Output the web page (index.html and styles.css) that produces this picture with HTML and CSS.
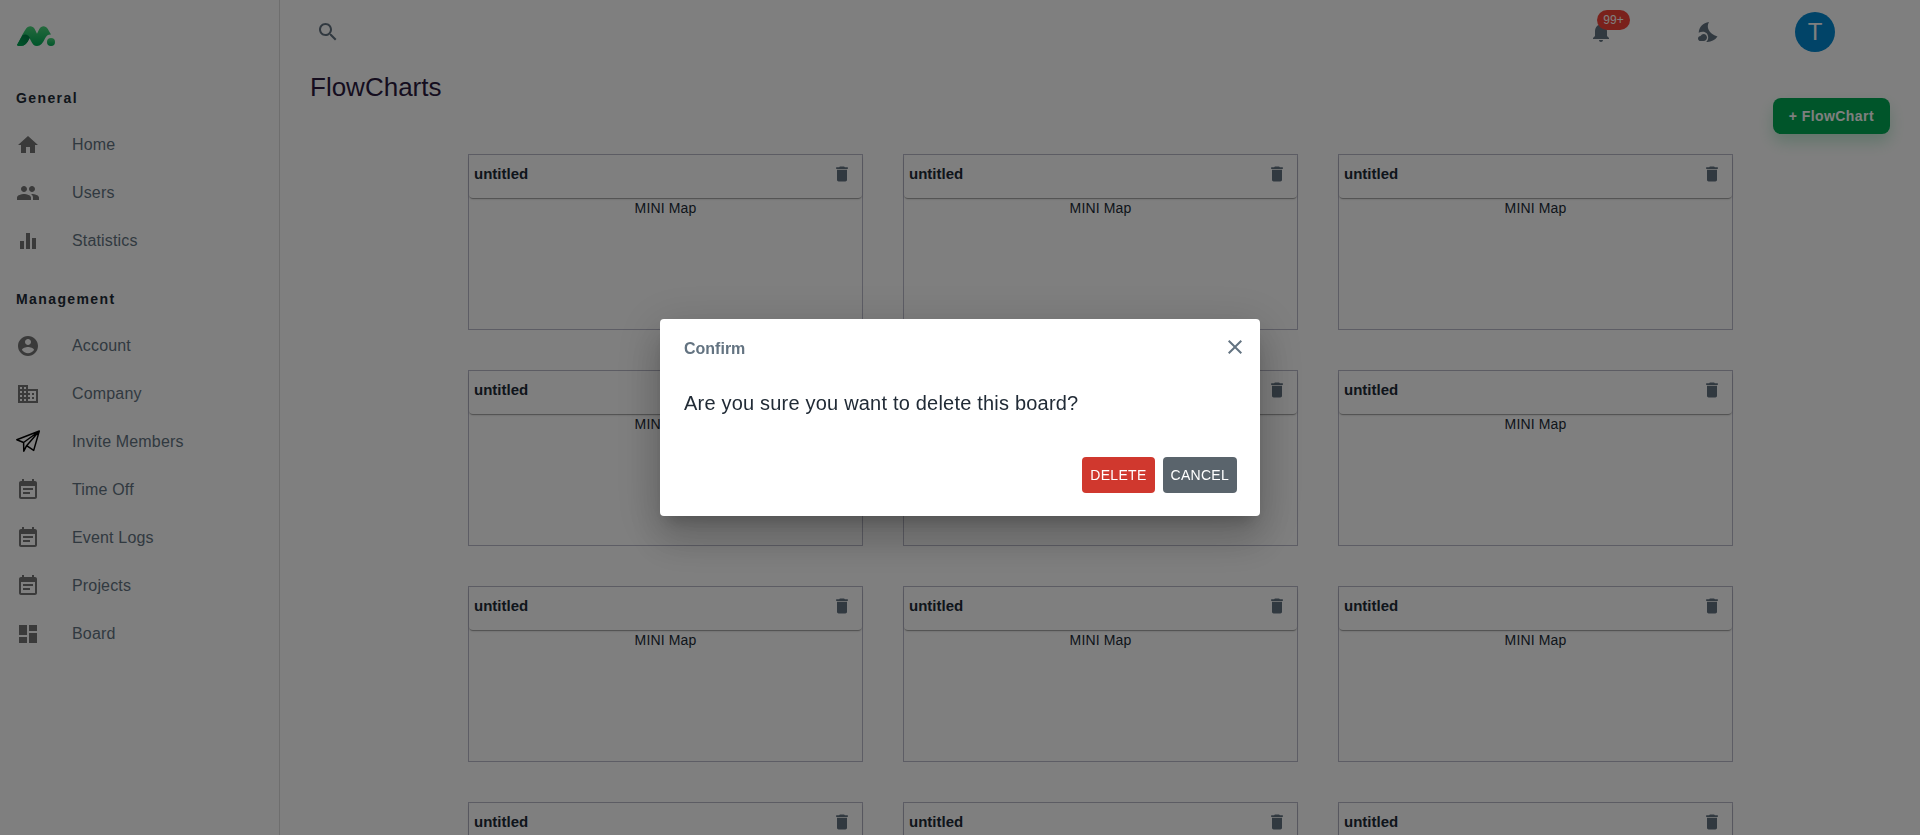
FILE: index.html
```html
<!DOCTYPE html>
<html lang="en">
<head>
<meta charset="utf-8">
<title>FlowCharts</title>
<link rel="stylesheet" href="styles.css">
</head>
<body>
<svg class="sprite" aria-hidden="true">
  <symbol id="i-home" viewBox="0 0 24 24"><path d="M10 20v-6h4v6h5v-8h3L12 3 2 12h3v8z"/></symbol>
  <symbol id="i-users" viewBox="0 0 24 24"><path d="M16 11c1.660 0 2.990-1.340 2.990-3S17.660 5 16 5s-3 1.340-3 3 1.340 3 3 3zm-8 0c1.660 0 2.990-1.340 2.990-3S9.660 5 8 5 5 6.340 5 8s1.340 3 3 3zm0 2c-2.330 0-7 1.170-7 3.500V19h14v-2.500c0-2.330-4.670-3.500-7-3.500zm8 0c-.290 0-.620.020-.970.050 1.160.840 1.970 1.970 1.970 3.450V19h6v-2.500c0-2.330-4.670-3.500-7-3.500z"/></symbol>
  <symbol id="i-stats" viewBox="0 0 24 24"><path d="M4 12h4v8H4zM10 4h4v16h-4zM16 9h4v11h-4z"/></symbol>
  <symbol id="i-account" viewBox="0 0 24 24"><path d="M12 2C6.480 2 2 6.480 2 12s4.480 10 10 10 10-4.480 10-10S17.520 2 12 2zm0 3c1.660 0 3 1.340 3 3s-1.340 3-3 3-3-1.340-3-3 1.340-3 3-3zm0 14.200c-2.500 0-4.710-1.280-6-3.220.030-1.990 4-3.080 6-3.080 1.990 0 5.970 1.090 6 3.080-1.290 1.940-3.500 3.220-6 3.220z"/></symbol>
  <symbol id="i-company" viewBox="0 0 24 24"><path d="M12 7V3H2v18h20V7H12zM6 19H4v-2h2v2zm0-4H4v-2h2v2zm0-4H4V9h2v2zm0-4H4V5h2v2zm4 12H8v-2h2v2zm0-4H8v-2h2v2zm0-4H8V9h2v2zm0-4H8V5h2v2zm10 12h-8v-2h2v-2h-2v-2h2v-2h-2V9h8v10zm-2-8h-2v2h2v-2zm0 4h-2v2h2v-2z"/></symbol>
  <symbol id="i-invite" viewBox="0 0 24 24"><path d="M.8 9.700 23.300 1 17.700 20.400 10.600 15.700 7.800 21.200 7.600 12.500ZM23.300 1 7.600 12.500M23.300 1 10.600 15.700" fill="none" stroke="currentColor" stroke-width="1.500" stroke-linejoin="round"/></symbol>
  <symbol id="i-event" viewBox="0 0 24 24"><path d="M17 10H7v2h10v-2zm2-7h-1V1h-2v2H8V1H6v2H5c-1.110 0-1.990.900-1.990 2L3 19c0 1.100.890 2 2 2h14c1.100 0 2-.900 2-2V5c0-1.100-.900-2-2-2zm0 16H5V8h14v11zm-5-5H7v2h7v-2z"/></symbol>
  <symbol id="i-board" viewBox="0 0 24 24"><path d="M3 13h8V3H3v10zm0 8h8v-6H3v6zm10 0h8V11h-8v10zm0-18v6h8V3h-8z"/></symbol>
  <symbol id="i-search" viewBox="0 0 24 24"><path d="M15.500 14h-.790l-.280-.270C15.410 12.590 16 11.110 16 9.500 16 5.910 13.090 3 9.500 3S3 5.910 3 9.500 5.910 16 9.500 16c1.610 0 3.090-.590 4.230-1.570l.270.280v.790l5 4.990L20.490 19l-4.990-5zm-6 0C7.010 14 5 11.990 5 9.500S7.010 5 9.500 5 14 7.010 14 9.500 11.990 14 9.500 14z"/></symbol>
  <symbol id="i-bell" viewBox="0 0 24 24"><path d="M12 22c1.100 0 2-.900 2-2h-4c0 1.100.890 2 2 2zm6-6v-5c0-3.070-1.640-5.640-4.500-6.320V4c0-.830-.670-1.500-1.500-1.500s-1.500.670-1.500 1.500v.680C7.630 5.360 6 7.920 6 11v5l-2 2v1h16v-1l-2-2z"/></symbol>
  <symbol id="i-night" viewBox="0 0 24 24"><path d="M2.700 12.800C3 7.200 7 2.900 13 2.100c-3 5.200-.5 11.600 8.500 14.500-2.900 4-6.800 5.800-11.300 5.400 1.300-1.200 2-2.700 2-4.500 0-3.300-2.200-5.700-5.400-5.700-1.600 0-2.900.3-4.100 1z"/><path d="M4.600 21C3 21 2 19.800 2 18.400 2 17 3.100 16 4.500 16c.8-1.300 2-2 3.200-2 1.800 0 3.300 1.600 3.300 3.500S9.500 21 7.600 21z"/></symbol>
  <symbol id="i-trash" viewBox="0 0 24 24"><path d="M6 19c0 1.100.900 2 2 2h8c1.100 0 2-.900 2-2V7H6v12zM19 4h-3.500l-1-1h-5l-1 1H5v2h14V4z"/></symbol>
  <symbol id="i-close" viewBox="0 0 24 24"><path d="M19 6.410 17.590 5 12 10.590 6.410 5 5 6.410 10.590 12 5 17.590 6.410 19 12 13.410 17.590 19 19 17.590 13.410 12z"/></symbol>
</svg>
<div class="app">
  <aside class="sidebar">
    <a class="logo" href="#" aria-label="Dashboard">
      <svg viewBox="0 0 38 20" width="38" height="20">
        <defs>
          <linearGradient id="g1" x1="0" y1="0" x2="0" y2="1"><stop offset="0" stop-color="#4bd47c"/><stop offset="1" stop-color="#00ab55"/></linearGradient>
          <linearGradient id="g2" x1="1" y1="0" x2="0" y2="1"><stop offset="0" stop-color="#007b45"/><stop offset="1" stop-color="#00ab55"/></linearGradient>
        </defs>
        <path fill="url(#g1)" d="M0 19C3 14 6 7 8.500 3.500 11-.8 15.500-.8 17.700 3L20 7.800l2.300-4.800C24.500-.8 28.500-.8 30.800 3L34 8.500c-3-.2-4.800 1.500-6 4C26 17 23.500 20 20 20c-3 0-4.500-2-6-5l-1.500-3C10 17 8 20 3.500 20 2 20 .5 20 0 19z"/>
        <path fill="url(#g2)" d="M0 19 5.500 9.300c2.800-2 6.300-.3 7.300 2.500C10.500 17 8 20 3.500 20 2 20 .5 20 0 19z"/>
        <circle cx="34" cy="16" r="4" fill="url(#g1)"/>
      </svg>
    </a>
    <nav class="nav">
      <h2 class="nav-title">General</h2>
      <a class="nav-item" href="#"><svg class="icon"><use href="#i-home"/></svg>Home</a>
      <a class="nav-item" href="#"><svg class="icon"><use href="#i-users"/></svg>Users</a>
      <a class="nav-item" href="#"><svg class="icon"><use href="#i-stats"/></svg>Statistics</a>
      <h2 class="nav-title">Management</h2>
      <a class="nav-item" href="#"><svg class="icon"><use href="#i-account"/></svg>Account</a>
      <a class="nav-item" href="#"><svg class="icon"><use href="#i-company"/></svg>Company</a>
      <a class="nav-item" href="#"><svg class="icon icon-dark"><use href="#i-invite"/></svg>Invite Members</a>
      <a class="nav-item" href="#"><svg class="icon"><use href="#i-event"/></svg>Time Off</a>
      <a class="nav-item" href="#"><svg class="icon"><use href="#i-event"/></svg>Event Logs</a>
      <a class="nav-item" href="#"><svg class="icon"><use href="#i-event"/></svg>Projects</a>
      <a class="nav-item" href="#"><svg class="icon"><use href="#i-board"/></svg>Board</a>
    </nav>
  </aside>
  <div class="content">
    <header class="topbar">
      <button class="icon-button" type="button" aria-label="Search"><svg class="icon"><use href="#i-search"/></svg></button>
      <div class="topbar-actions">
        <button class="icon-button" type="button" aria-label="Notifications"><svg class="icon"><use href="#i-bell"/></svg><span class="badge">99+</span></button>
        <button class="icon-button" type="button" aria-label="Dark mode"><svg class="icon"><use href="#i-night"/></svg></button>
        <button class="avatar" type="button">T</button>
      </div>
    </header>
    <main class="page">
      <h1 class="page-title">FlowCharts</h1>
      <div class="toolbar"><button class="add-button" type="button">+ FlowChart</button></div>
      <div class="grid">
        <article class="card"><div class="card-head"><h3 class="card-title">untitled</h3><button class="trash" type="button" aria-label="Delete board"><svg class="icon-small"><use href="#i-trash"/></svg></button></div><p class="card-map">MINI Map</p></article>
        <article class="card"><div class="card-head"><h3 class="card-title">untitled</h3><button class="trash" type="button" aria-label="Delete board"><svg class="icon-small"><use href="#i-trash"/></svg></button></div><p class="card-map">MINI Map</p></article>
        <article class="card"><div class="card-head"><h3 class="card-title">untitled</h3><button class="trash" type="button" aria-label="Delete board"><svg class="icon-small"><use href="#i-trash"/></svg></button></div><p class="card-map">MINI Map</p></article>
        <article class="card"><div class="card-head"><h3 class="card-title">untitled</h3><button class="trash" type="button" aria-label="Delete board"><svg class="icon-small"><use href="#i-trash"/></svg></button></div><p class="card-map">MINI Map</p></article>
        <article class="card"><div class="card-head"><h3 class="card-title">untitled</h3><button class="trash" type="button" aria-label="Delete board"><svg class="icon-small"><use href="#i-trash"/></svg></button></div><p class="card-map">MINI Map</p></article>
        <article class="card"><div class="card-head"><h3 class="card-title">untitled</h3><button class="trash" type="button" aria-label="Delete board"><svg class="icon-small"><use href="#i-trash"/></svg></button></div><p class="card-map">MINI Map</p></article>
        <article class="card"><div class="card-head"><h3 class="card-title">untitled</h3><button class="trash" type="button" aria-label="Delete board"><svg class="icon-small"><use href="#i-trash"/></svg></button></div><p class="card-map">MINI Map</p></article>
        <article class="card"><div class="card-head"><h3 class="card-title">untitled</h3><button class="trash" type="button" aria-label="Delete board"><svg class="icon-small"><use href="#i-trash"/></svg></button></div><p class="card-map">MINI Map</p></article>
        <article class="card"><div class="card-head"><h3 class="card-title">untitled</h3><button class="trash" type="button" aria-label="Delete board"><svg class="icon-small"><use href="#i-trash"/></svg></button></div><p class="card-map">MINI Map</p></article>
        <article class="card"><div class="card-head"><h3 class="card-title">untitled</h3><button class="trash" type="button" aria-label="Delete board"><svg class="icon-small"><use href="#i-trash"/></svg></button></div><p class="card-map">MINI Map</p></article>
        <article class="card"><div class="card-head"><h3 class="card-title">untitled</h3><button class="trash" type="button" aria-label="Delete board"><svg class="icon-small"><use href="#i-trash"/></svg></button></div><p class="card-map">MINI Map</p></article>
        <article class="card"><div class="card-head"><h3 class="card-title">untitled</h3><button class="trash" type="button" aria-label="Delete board"><svg class="icon-small"><use href="#i-trash"/></svg></button></div><p class="card-map">MINI Map</p></article>
      </div>
    </main>
  </div>
</div>
<div class="backdrop">
  <section class="dialog" role="dialog" aria-modal="true" aria-labelledby="dialog-title">
    <div class="dialog-head">
      <h2 class="dialog-title" id="dialog-title">Confirm</h2>
      <button class="close" type="button" aria-label="Close"><svg class="icon"><use href="#i-close"/></svg></button>
    </div>
    <p class="dialog-text">Are you sure you want to delete this board?</p>
    <div class="dialog-actions">
      <button class="action action-delete" type="button">DELETE</button>
      <button class="action action-cancel" type="button">CANCEL</button>
    </div>
  </section>
</div>
</body>
</html>
```

FILE: styles.css
```css
*, *::before, *::after { box-sizing: border-box; }
body {
  margin: 0;
  height: 100vh;
  overflow: hidden;
  background: #fff;
  color: #212b36;
  font-family: "Liberation Sans", Arial, sans-serif;
  font-size: 16px;
  line-height: 24px;
}
h1, h2, h3, p { margin: 0; }
button { font-family: inherit; border: 0; padding: 0; background: none; color: inherit; cursor: pointer; }
.sprite { position: absolute; width: 0; height: 0; }
.icon { display: block; width: 24px; height: 24px; fill: currentColor; flex: none; }
.icon-small { display: block; width: 20px; height: 20px; fill: currentColor; }

.app { display: flex; height: 100%; }
.sidebar { width: 280px; flex: none; border-right: 1px solid #dcdcdc; }
.logo { display: block; padding: 26px 17px 0; }
.logo svg { display: block; }
.nav { padding-top: 40px; }
.nav-title { padding: 0 16px; font-size: 14px; line-height: 24px; letter-spacing: 0.1em; margin-bottom: 11px; }
.nav-item + .nav-title { margin-top: 22px; }
.nav-item { display: flex; align-items: center; gap: 32px; height: 48px; padding: 0 16px; color: #637381; text-decoration: none; letter-spacing: 0.01em; }
.nav-item .icon { color: #757575; }
.nav-item .icon-dark { color: #000; }

.content { flex: 1; min-width: 0; }
.topbar { display: flex; align-items: center; justify-content: space-between; height: 64px; padding: 0 85px 0 28px; color: #637381; }
.topbar-actions { display: flex; align-items: center; gap: 67px; }
.icon-button { position: relative; display: grid; place-items: center; width: 40px; height: 40px; }
.badge { position: absolute; top: -2px; left: 16px; min-width: 33px; height: 20px; padding: 0 6px; border-radius: 10px; background: #f44336; color: #fff; font-size: 12px; line-height: 20px; letter-spacing: 0.01em; text-align: center; }
.avatar { width: 40px; height: 40px; border-radius: 50%; background: #0288d1; color: #fff; font-size: 24px; line-height: 40px; }

.page { padding: 4px 30px 0; }
.page-title { color: #2a1a3e; font-size: 26px; line-height: 38px; font-weight: 400; }
.toolbar { display: flex; justify-content: flex-end; margin-top: -8px; }
.add-button { height: 36px; padding: 0 16px; border-radius: 8px; background: #00ab55; color: #fff; font-size: 14px; font-weight: 700; letter-spacing: 0.03em; box-shadow: 0 8px 16px rgba(0, 171, 85, 0.24); }
.grid { display: grid; grid-template-columns: repeat(3, 1fr); gap: 40px; margin-top: 20px; padding: 0 157px 0 158px; }
.card { height: 176px; border: 1px solid #bbbbcb; }
.card-head { display: flex; justify-content: space-between; height: 43px; padding: 7px 9px 0 5px; border-radius: 4px; box-shadow: 0 2px 1px -1px rgba(0, 0, 0, 0.2), 0 1px 1px rgba(0, 0, 0, 0.14), 0 1px 3px rgba(0, 0, 0, 0.12); }
.card-title { font-size: 15px; line-height: 24px; }
.trash { display: grid; place-items: center; width: 22px; height: 24px; color: #637381; }
.card-map { font-size: 14px; line-height: 20px; letter-spacing: 0.01em; text-align: center; }

.backdrop { position: fixed; inset: 0; display: grid; place-items: center; background: rgba(0, 0, 0, 0.5); }
.dialog { width: 600px; max-width: 100%; padding: 16px 23px 23px 24px; border-radius: 4px; background: #fff; box-shadow: 0 11px 15px -7px rgba(0, 0, 0, 0.2), 0 24px 38px 3px rgba(0, 0, 0, 0.14), 0 9px 46px 8px rgba(0, 0, 0, 0.12); }
.dialog-head { display: flex; justify-content: space-between; color: #637381; }
.dialog-title { font-size: 16px; line-height: 28px; }
.close { display: block; margin-right: -10px; height: 24px; }
.dialog-text { margin-top: 24px; font-size: 20px; line-height: 32px; letter-spacing: 0.01em; }
.dialog-actions { display: flex; justify-content: flex-end; gap: 8px; margin-top: 38px; }
.action { height: 36px; padding: 0 8px; border-radius: 4px; color: #fff; font-size: 14px; letter-spacing: 0.02em; }
.action-delete { background: #d0382e; }
.action-cancel { background: #5a646c; }
```
